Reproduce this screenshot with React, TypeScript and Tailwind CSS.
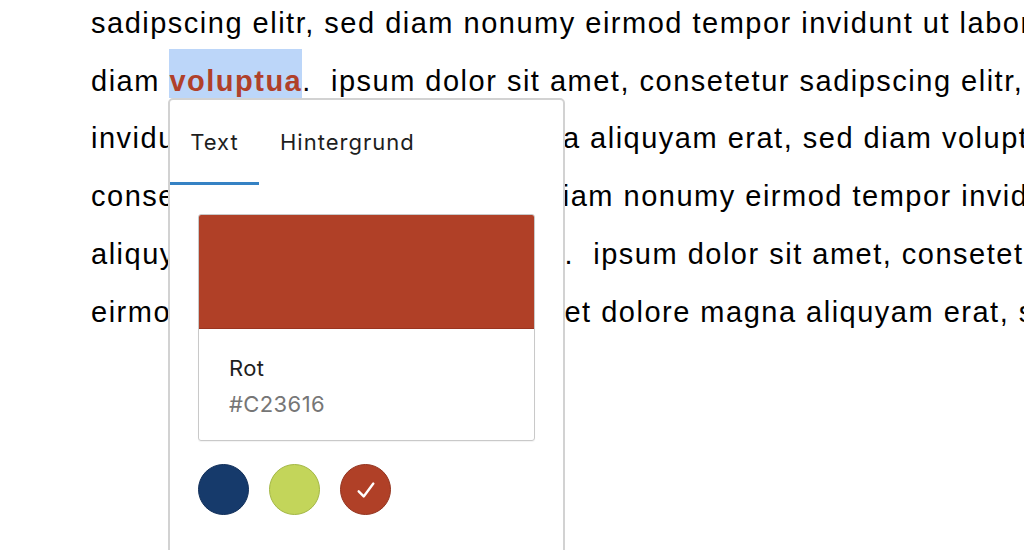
import React from "react";

const lines: React.ReactNode[] = [
  "sadipscing elitr, sed diam nonumy eirmod tempor invidunt ut labore et dolore magna",
  <>
    diam{" "}
    <span className="bg-[#bcd6f9] font-bold text-[#b0402a] pt-[16px] pb-[1px]">voluptua</span>
    {".\u00a0 ipsum dolor sit amet, consetetur sadipscing elitr, sed diam nonumy"}
  </>,
  "invidunt ut labore et dolore magna aliquyam erat, sed diam voluptua. At vero",
  "consetetur sadipscing elitr, sed diam nonumy eirmod tempor invidunt ut labore",
  "aliquyam erat, sed diam voluptua.\u00a0 ipsum dolor sit amet, consetetur sadipscing",
  "eirmod tempor invidunt ut labore et dolore magna aliquyam erat, sed diam",
];

export default function App() {
  return (
    <div className="relative w-[1024px] h-[550px] overflow-hidden bg-white">
      <div
        className="pl-[91px] -mt-[5px] text-[29px] leading-[57.7px] text-black tracking-[1.5px]"
        style={{ fontFamily: '"Liberation Sans", Arial, sans-serif' }}
      >
        {lines.map((l, i) => (
          <div key={i} className="whitespace-nowrap">
            {l}
          </div>
        ))}
      </div>

      <div
        className="absolute left-[168px] top-[98px] w-[397px] h-[470px] bg-white border-2 border-[#d2d2d2] rounded-t-[5px]"
        style={{ fontFamily: 'Inter, "Noto Sans", sans-serif' }}
      >
        <div className="flex h-[85px] items-stretch text-[22px] tracking-[1px] text-[#1e1e1e]">
          <div className="w-[89px] flex items-center justify-center border-b-[3px] border-[#3582c4] pt-[3px]">
            Text
          </div>
          <div className="pl-[21px] flex items-center">Hintergrund</div>
        </div>

        <div className="px-[28px] pt-[29px]">
          <div className="rounded-[3px] border border-[#c9c9c9] overflow-hidden shadow-[0_1px_1px_rgba(0,0,0,0.05)]">
            <div className="h-[114px] bg-[#b04027] border-b border-[#9a3520]" />
            <div className="h-[111px] pl-[30px] pt-[24px] text-[22px] tracking-[0.4px] leading-[30px]">
              <div className="text-[#1e1e1e]">Rot</div>
              <div className="text-[#767676] mt-[6px]">#C23616</div>
            </div>
          </div>

          <div className="flex gap-[20px] mt-[23px]">
            <div className="w-[51px] h-[51px] rounded-full bg-[#163a6b] border border-[#112f59]" />
            <div className="w-[51px] h-[51px] rounded-full bg-[#c3d55a] border border-[#a3b744]" />
            <div className="w-[51px] h-[51px] rounded-full bg-[#b04027] border border-[#93341f] flex items-center justify-center">
              <svg width="22" height="22" viewBox="0 0 24 24" fill="none" stroke="white" strokeWidth="2.6" strokeLinecap="round" strokeLinejoin="round">
                <path d="M4 13.5 L9.5 19 L20 5" />
              </svg>
            </div>
          </div>
        </div>
      </div>
    </div>
  );
}
